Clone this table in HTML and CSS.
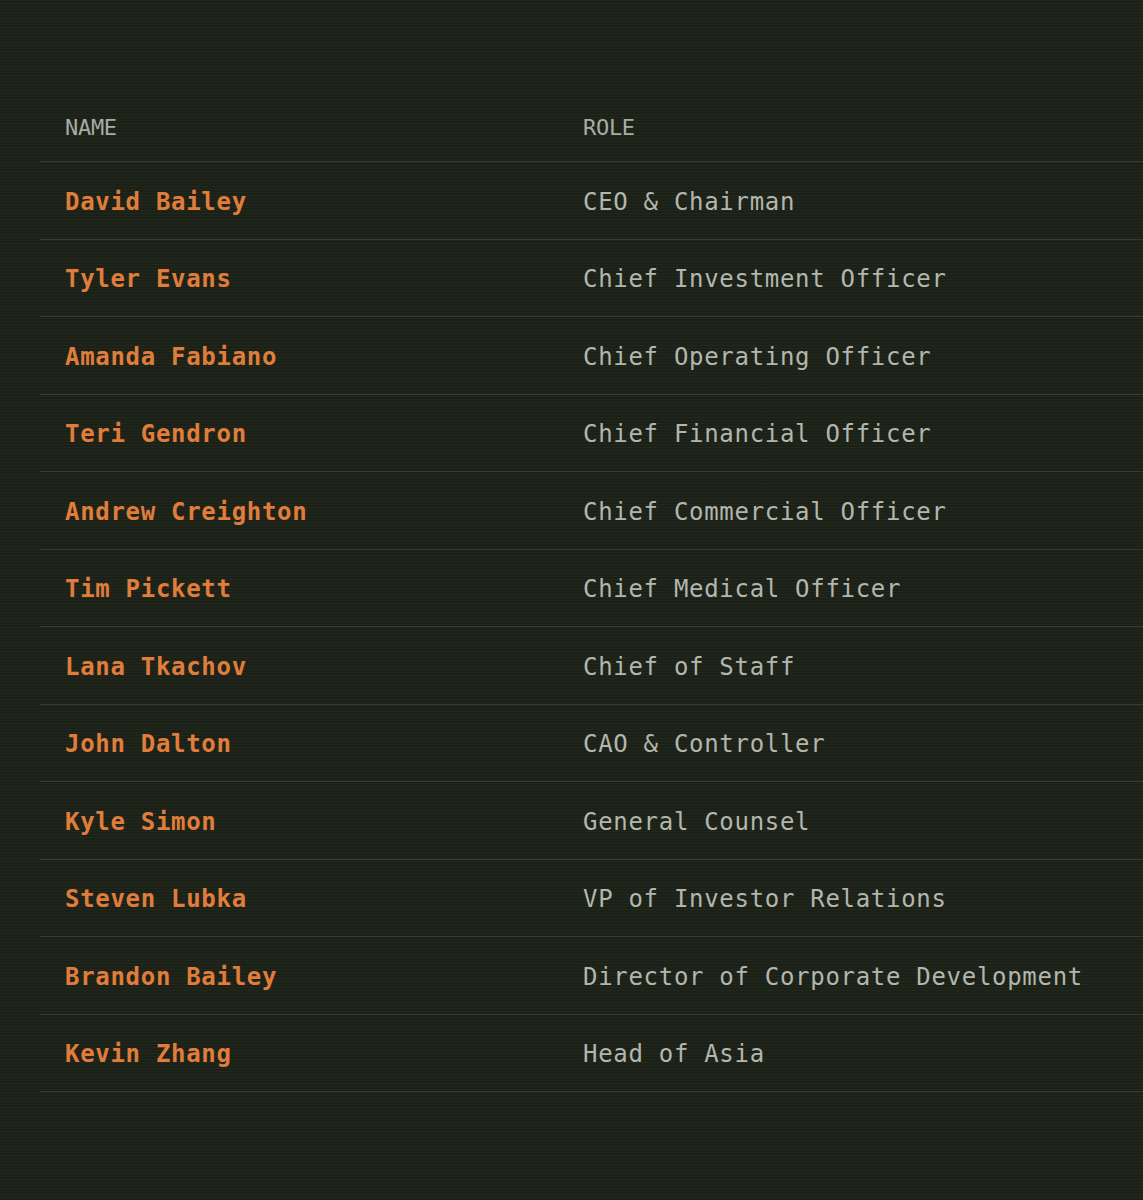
FILE: index.html
```html
<!DOCTYPE html>
<html lang="en">
<head>
<meta charset="utf-8">
<title>Leadership</title>
<link rel="stylesheet" href="styles.css">
</head>
<body>
<main class="page">
  <div class="team">
    <div class="row head">
      <div class="cell">NAME</div>
      <div class="cell">ROLE</div>
    </div>
    <div class="row"><div class="cell name">David Bailey</div><div class="cell role">CEO &amp; Chairman</div></div>
    <div class="row"><div class="cell name">Tyler Evans</div><div class="cell role">Chief Investment Officer</div></div>
    <div class="row"><div class="cell name">Amanda Fabiano</div><div class="cell role">Chief Operating Officer</div></div>
    <div class="row"><div class="cell name">Teri Gendron</div><div class="cell role">Chief Financial Officer</div></div>
    <div class="row"><div class="cell name">Andrew Creighton</div><div class="cell role">Chief Commercial Officer</div></div>
    <div class="row"><div class="cell name">Tim Pickett</div><div class="cell role">Chief Medical Officer</div></div>
    <div class="row"><div class="cell name">Lana Tkachov</div><div class="cell role">Chief of Staff</div></div>
    <div class="row"><div class="cell name">John Dalton</div><div class="cell role">CAO &amp; Controller</div></div>
    <div class="row"><div class="cell name">Kyle Simon</div><div class="cell role">General Counsel</div></div>
    <div class="row"><div class="cell name">Steven Lubka</div><div class="cell role">VP of Investor Relations</div></div>
    <div class="row"><div class="cell name">Brandon Bailey</div><div class="cell role">Director of Corporate Development</div></div>
    <div class="row"><div class="cell name">Kevin Zhang</div><div class="cell role">Head of Asia</div></div>
  </div>
</main>
</body>
</html>
```
FILE: styles.css
```css
html, body {
  margin: 0;
  padding: 0;
}
body {
  background-color: #1c2118;
  background-image: repeating-linear-gradient(to bottom, rgba(110,130,90,0.07) 0, rgba(110,130,90,0.07) 1px, rgba(0,0,0,0) 1px, rgba(0,0,0,0) 3px);
  font-family: "DejaVu Sans Mono", "Liberation Mono", monospace;
  min-height: 1200px;
}
.page {
  padding-top: 90px;
  padding-left: 40px;
}
.team {
  display: flex;
  flex-direction: column;
}
.row {
  display: grid;
  grid-template-columns: 518px 1fr;
  align-items: center;
  height: 76.5px;
  border-bottom: 1px solid #373c32;
}
.row.head {
  height: 71px;
  font-size: 22px;
  color: #a9aca4;
  letter-spacing: -0.3px;
}
.cell {
  padding-left: 25px;
  padding-top: 3px;
  white-space: nowrap;
}
.name {
  font-size: 24px;
  font-weight: bold;
  color: #e07d3b;
  letter-spacing: 0.7px;
}
.role {
  font-size: 24px;
  color: #b3b6ad;
  letter-spacing: 0.7px;
}
```
